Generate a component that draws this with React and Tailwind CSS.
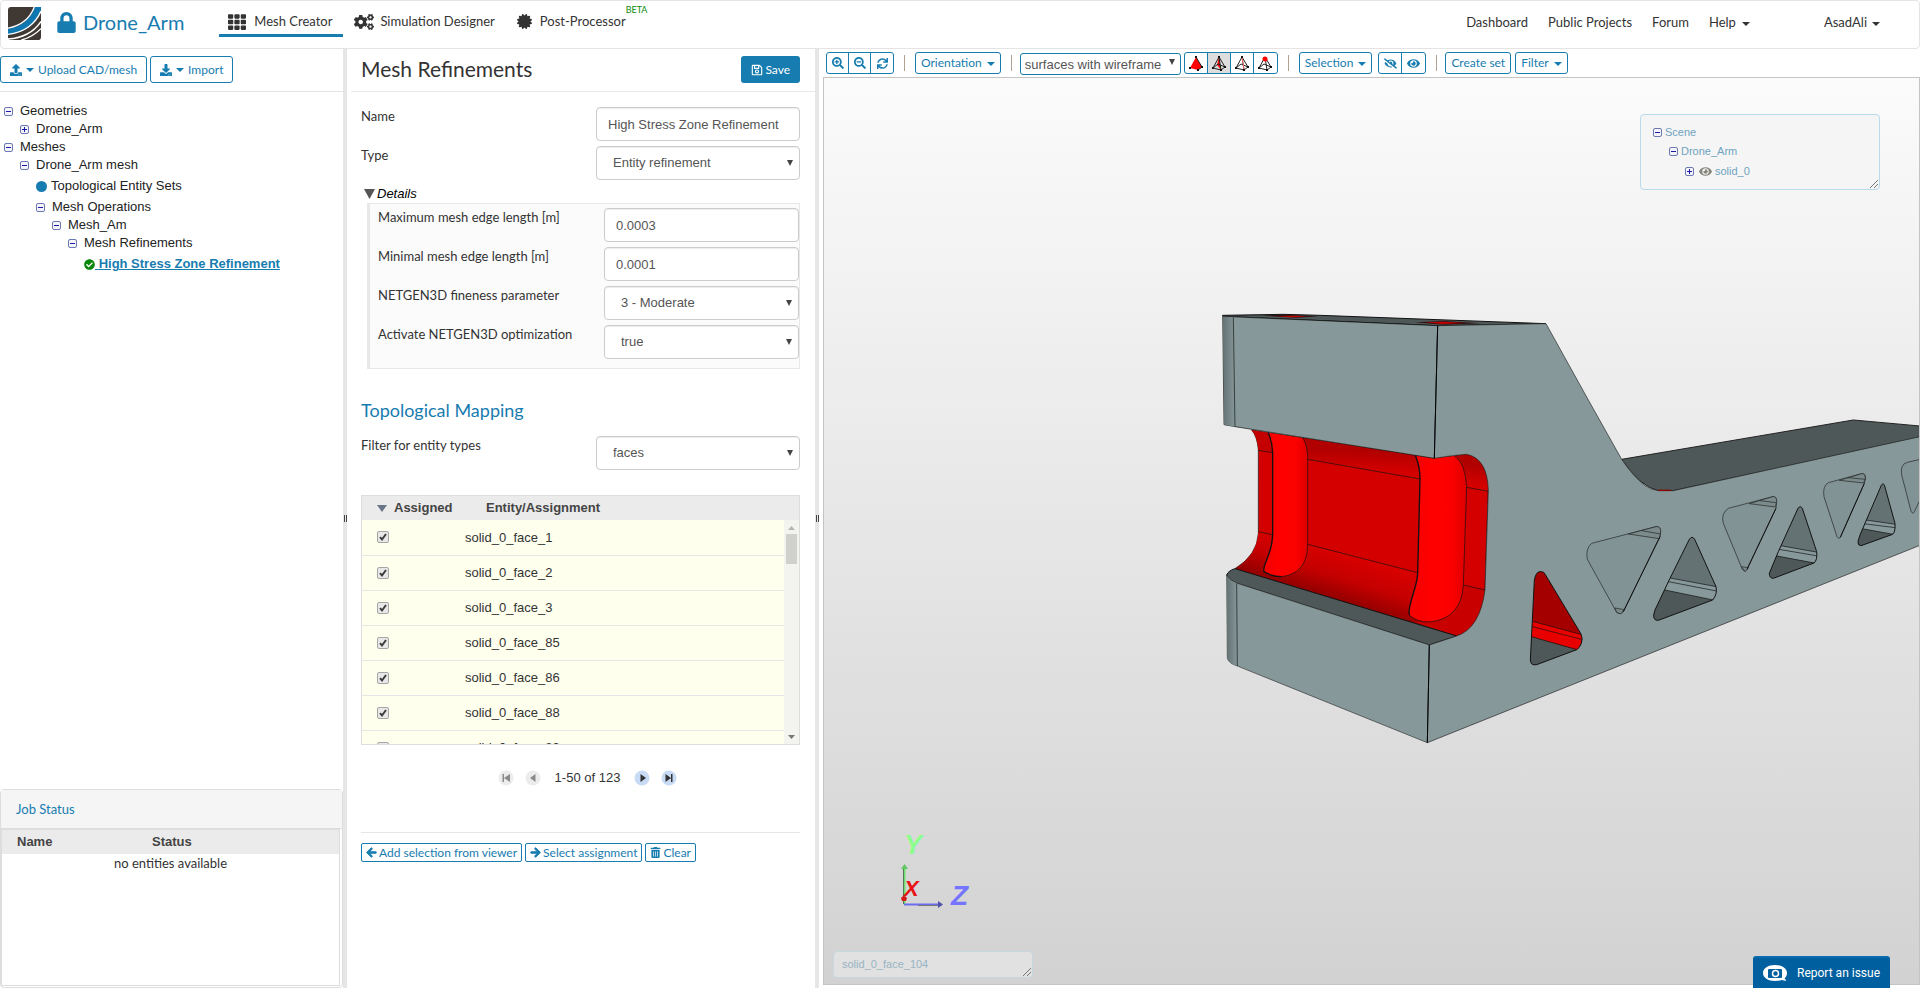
import { useState } from 'react'
import {
  FaArrowLeft, FaArrowRight, FaCertificate, FaCheckCircle, FaCogs, FaDownload, FaEye,
  FaEyeSlash, FaLock, FaRegSave, FaSearchMinus, FaSearchPlus, FaSync, FaTh, FaTrashAlt, FaUpload,
} from 'react-icons/fa'

const TREE = [
  { label: 'Geometries', pad: 'pl-1', open: true },
  { label: 'Drone_Arm', pad: 'pl-5', open: false },
  { label: 'Meshes', pad: 'pl-1', open: true },
  { label: 'Drone_Arm mesh', pad: 'pl-5', open: true },
  { label: 'Topological Entity Sets', pad: 'pl-9', leaf: 'set' },
  { label: 'Mesh Operations', pad: 'pl-9', open: true },
  { label: 'Mesh_Am', pad: 'pl-[52px]', open: true },
  { label: 'Mesh Refinements', pad: 'pl-[68px]', open: true },
  { label: 'High Stress Zone Refinement', pad: 'pl-[84px]', leaf: 'active' },
]

const FACES = [1, 2, 3, 85, 86, 88, 89]

function Caret() {
  return (
    <svg width="8" height="4" viewBox="0 0 8 4" className="mt-px shrink-0">
      <path d="M0 0h8L4 4z" fill="currentColor" />
    </svg>
  )
}

function Toggle({ open }) {
  return (
    <svg width="9" height="9" viewBox="0 0 9 9" className="shrink-0">
      <rect x=".5" y=".5" width="8" height="8" rx="1.5" fill="#f4f4fa" stroke="#6b78b4" />
      <path d={open ? 'M2 4.5h5' : 'M2 4.5h5M4.5 2v5'} stroke="#1a1aa8" />
    </svg>
  )
}

function Logo() {
  return (
    <svg width="33" height="33" viewBox="0 0 32 32">
      <rect width="32" height="32" rx="3" fill="#403833" />
      <path d="M0 21C13 19 22 12 26 0h6v3C28 16 17 25 0 27z" fill="#0f77b0" />
      <path d="M0 20.500C13 18 21 12 25.500 0M0 26.500C16 25 27 16 32 4M0 31C15 30 26 23 32 14M13 32c8-2 14-6 19-11" fill="none" stroke="#fff" strokeWidth="1.300" />
    </svg>
  )
}

function Header() {
  return (
    <header className="flex h-[49px] shrink-0 items-start justify-between rounded border border-[#e4e4e4] text-[13px] text-[#333]">
      <div className="flex">
        <a href="#home" aria-label="Home" className="ml-[7px] mt-[6px]"><Logo /></a>
        <a href="#project" className="ml-[15px] mt-[5px] flex h-8 items-center gap-[6px] text-[20px] text-[#177cb0]">
          <FaLock size={21} />
          Drone_Arm
        </a>
        <nav className="ml-[35px] flex">
          <a href="#mesh" className="flex h-9 items-center gap-2 border-b-3 border-[#177cb0] pl-[9px] pr-[11px] pt-2">
            <FaTh size={18} /> Mesh Creator
          </a>
          <a href="#simulation" className="ml-[11px] flex h-9 items-center gap-[6px] border-b-3 border-transparent pt-2">
            <FaCogs size={20} /> Simulation Designer
          </a>
          <a href="#post" className="ml-[22px] flex h-9 items-center gap-2 border-b-3 border-transparent pt-2">
            <FaCertificate size={15} /> Post-Processor
          </a>
          <sup className="top-0 mt-1 text-[9px] leading-[10px] text-[#0a8a0a]">BETA</sup>
        </nav>
      </div>
      <nav className="mr-[39px] flex h-11 items-center">
        <a href="#dashboard">Dashboard</a>
        <a href="#public" className="ml-5">Public Projects</a>
        <a href="#forum" className="ml-5">Forum</a>
        <a href="#help" className="ml-5 flex items-center gap-[6px]">Help <Caret /></a>
        <a href="#account" className="ml-[74px] flex items-center gap-[5px]">AsadAli <Caret /></a>
      </nav>
    </header>
  )
}

function TreeRow({ item }) {
  if (item.leaf === 'set') {
    return (
      <li className={`flex h-6 items-center gap-1 ${item.pad}`}>
        <span className="size-[11px] rounded-full bg-[#177cb0]" />
        {item.label}
      </li>
    )
  }
  if (item.leaf === 'active') {
    return (
      <li className={`flex h-6 items-center ${item.pad}`}>
        <FaCheckCircle size={11} className="text-[#0a860a]" />
        <a href="#refinement" className="whitespace-pre font-bold text-[#177cb0] underline"> {item.label}</a>
      </li>
    )
  }
  return (
    <li className={`flex h-[18px] items-center gap-[7px] ${item.pad}`}>
      <Toggle open={item.open} />
      {item.label}
    </li>
  )
}

function Sidebar() {
  const btn = 'flex h-[27px] items-center gap-1 rounded-[3px] border border-[#177cb0] px-[9px] text-[12px] text-[#177cb0]'
  return (
    <aside className="flex w-[343px] shrink-0 flex-col">
      <div className="flex gap-[3px] border-b border-[#e4e4e4] pb-2 pt-[7px]">
        <button className={btn}><FaUpload size={12} /><Caret />Upload CAD/mesh</button>
        <button className={btn}><FaDownload size={12} /><Caret />Import</button>
      </div>
      <ul className="mt-[10px] flex-1 font-['Liberation_Sans',sans-serif] text-[13px] text-[#222]">
        {TREE.map(item => <TreeRow key={item.label} item={item} />)}
      </ul>
      <section className="flex h-[199px] flex-col rounded border border-[#ddd]">
        <h2 className="flex h-[39px] shrink-0 items-center border-b border-[#ddd] bg-[#f5f5f5] px-[15px] pt-px text-[13px] text-[#177cb0]">Job Status</h2>
        <div className="mb-px mr-[2px] flex-1 border border-[#ddd]">
          <table className="w-full table-fixed text-[13px]">
            <thead>
              <tr className="h-6 bg-[#ebebeb] text-left font-['Liberation_Sans',sans-serif] text-[#444]">
                <th className="w-[135px] pl-[15px]">Name</th>
                <th className="pl-[15px]">Status</th>
              </tr>
            </thead>
            <tbody>
              <tr><td colSpan={2} className="text-center leading-[18px]">no entities available</td></tr>
            </tbody>
          </table>
        </div>
      </section>
    </aside>
  )
}

function Splitter() {
  return (
    <div className="flex w-1 shrink-0 items-center justify-center gap-px bg-[#e6e6e6]">
      <span className="h-[7px] w-px bg-[#444]" />
      <span className="h-[7px] w-px bg-[#444]" />
    </div>
  )
}

function Field({ id, label, width, children }) {
  return (
    <div className="mb-[5px] flex items-start justify-between">
      <label htmlFor={id} className="text-[13px] leading-[18px] text-[#333]">{label}</label>
      <div className={`relative shrink-0 ${width}`}>{children}</div>
    </div>
  )
}

const CONTROL = "h-[34px] w-full appearance-none rounded border border-[#ccc] bg-white font-['Liberation_Sans',sans-serif] text-[13px] text-[#555] shadow-[inset_0_1px_1px_rgba(0,0,0,0.075)]"

function TextField({ id, label, value, width }) {
  return (
    <Field id={id} label={label} width={width}>
      <input id={id} defaultValue={value} className={`${CONTROL} px-[11px]`} />
    </Field>
  )
}

function SelectField({ id, label, value, width }) {
  return (
    <Field id={id} label={label} width={width}>
      <select id={id} defaultValue={value} className={`${CONTROL} px-4`}>
        <option>{value}</option>
      </select>
      <svg width="6" height="6" viewBox="0 0 6 6" className="pointer-events-none absolute right-[7px] top-[14px]">
        <path d="M0 0h6L3 6z" fill="#444" />
      </svg>
    </Field>
  )
}

function FaceRow({ n }) {
  const [checked, setChecked] = useState(true)
  const id = `face-${n}`
  return (
    <tr className="h-[35px] border-b border-[#e6e6e6] bg-[#ffffee]">
      <td className="pl-[15px]">
        <span className="relative block size-3">
          <input
            id={id}
            type="checkbox"
            checked={checked}
            onChange={() => setChecked(!checked)}
            className="block size-3 appearance-none rounded-[2px] border border-[#a6a6a6] bg-[#e8e8e8]"
          />
          {checked && (
            <svg viewBox="0 0 12 12" className="pointer-events-none absolute inset-0">
              <path d="M3 6.200l2 2.300 4-5.500" fill="none" stroke="#3c3c3c" strokeWidth="2" />
            </svg>
          )}
        </span>
      </td>
      <td><label htmlFor={id}>solid_0_face_{n}</label></td>
    </tr>
  )
}

function FaceTable() {
  return (
    <div className="relative h-[250px] overflow-hidden border border-[#ddd] font-['Liberation_Sans',sans-serif] text-[13px] text-[#333]">
      <table className="w-full table-fixed border-collapse">
        <thead>
          <tr className="h-6 bg-[#ebebeb] text-left text-[#444]">
            <th className="w-[103px]">
              <span className="flex items-center gap-[7px] pl-[15px]">
                <svg width="10" height="7" viewBox="0 0 10 7"><path d="M0 0h10L5 7z" fill="#6a7688" /></svg>
                Assigned
              </span>
            </th>
            <th className="pl-[21px]">Entity/Assignment</th>
          </tr>
        </thead>
        <tbody className="align-middle">
          {FACES.map(n => <FaceRow key={n} n={n} />)}
        </tbody>
      </table>
      {/* scrollbar */}
      <div className="absolute bottom-0 right-0 top-6 flex w-[15px] flex-col items-center bg-[#f3f4ef]">
        <svg width="7" height="4" viewBox="0 0 7 4" className="mt-[6px]"><path d="M0 4h7L3.500 0z" fill="#b4b4b0" /></svg>
        <span className="mt-1 h-[30px] w-[11px] bg-[#d0d1cc]" />
        <svg width="7" height="4" viewBox="0 0 7 4" className="mb-[5px] mt-auto"><path d="M0 0h7L3.500 4z" fill="#777" /></svg>
      </div>
    </div>
  )
}

function PagerButton({ label, d, active }) {
  return (
    <button aria-label={label} className="block size-4">
      <svg width="16" height="16" viewBox="0 0 16 16">
        <circle cx="8" cy="8" r="7.500" fill={active ? '#c8dbf5' : '#ececec'} />
        <path d={d} fill={active ? '#333' : '#8a8a8a'} />
      </svg>
    </button>
  )
}

function Panel() {
  const action = 'flex h-[19px] items-center gap-[2px] rounded-[2px] border border-[#177cb0] px-[4px] text-[12px] leading-none text-[#177cb0]'
  return (
    <main className="flex w-[468px] shrink-0 flex-col pl-1">
      <div className="flex items-center justify-between border-b border-[#e8e8e8] pb-2 pl-[10px] pr-[15px] pt-[7px]">
        <h1 className="pb-[2px] text-[21px] leading-[25px] text-[#333]">Mesh Refinements</h1>
        <button className="flex h-[27px] items-center gap-[2px] rounded-[3px] bg-[#177cb0] px-[10px] text-[12px] text-white">
          <FaRegSave size={12} /> Save
        </button>
      </div>
      <div className="pl-[10px] pr-[15px] pt-[15px]">
        <TextField id="name" label="Name" value="High Stress Zone Refinement" width="w-[204px]" />
        <SelectField id="type" label="Type" value="Entity refinement" width="w-[204px]" />
        <button className="ml-[3px] mt-[1px] flex h-[17px] items-center gap-[2px] font-['Liberation_Sans',sans-serif] text-[13px] italic text-black">
          <svg width="11" height="10" viewBox="0 0 11 10"><path d="M0 0h11L5.500 10z" fill="#555" /></svg>
          Details
        </button>
        <div className="ml-[6px] mt-px h-[166px] border border-l-3 border-[#e8e8e8] bg-[#fbfbfb] pl-2 pt-1">
          <TextField id="max" label="Maximum mesh edge length [m]" value="0.0003" width="w-[195px]" />
          <TextField id="min" label="Minimal mesh edge length [m]" value="0.0001" width="w-[195px]" />
          <SelectField id="fineness" label="NETGEN3D fineness parameter" value="3 - Moderate" width="w-[195px]" />
          <SelectField id="optimize" label="Activate NETGEN3D optimization" value="true" width="w-[195px]" />
        </div>
        <h2 className="mb-[14px] mt-[29px] text-[18px] leading-6 text-[#177cb0]">Topological Mapping</h2>
        <SelectField id="filter" label="Filter for entity types" value="faces" width="w-[204px]" />
        <div className="mt-[25px]"><FaceTable /></div>
        <div className="mt-[25px] flex h-4 items-center justify-center gap-[11px] pl-[14px] font-['Liberation_Sans',sans-serif] text-[13px] text-[#333]">
          <PagerButton label="First page" d="M4.500 4H6v8H4.500zM12 4v8L6 8z" />
          <PagerButton label="Previous page" d="M10.500 4v8L5 8z" />
          <span className="px-[3px]">1-50 of 123</span>
          <PagerButton label="Next page" d="M6.500 4v8L12 8z" active />
          <PagerButton label="Last page" d="M4.500 4v8L10 8zM10 4h1.500v8H10z" active />
        </div>
        <div className="mt-[46px] flex gap-[3px] border-t border-[#e6e6e6] pt-[10px]">
          <button className={action}><FaArrowLeft size={11} className="stroke-current stroke-[40]" />Add selection from viewer</button>
          <button className={action}><FaArrowRight size={11} className="stroke-current stroke-[40]" />Select assignment</button>
          <button className={action}><FaTrashAlt size={11} />Clear</button>
        </div>
      </div>
    </main>
  )
}

function TetraIcon({ kind }) {
  return (
    <svg width="14" height="15" viewBox="0 0 14 15">
      {kind === 'volume' && <path d="M7 1L1 12l8 2 4-3z" fill="#f00" />}
      {kind === 'face' && <path d="M7 1L5 9l4 5z" fill="#f00" />}
      <path
        d={kind === 'volume' ? 'M7 1l6 10-4 3' : 'M7 1L1 12l8 2 4-3zM7 1l2 13M1 12l5-4 7 3'}
        fill="none"
        stroke="#222"
      />
      {kind === 'edge' && <path d="M7 1l2 12" stroke="#f66" />}
      <path d="M0 11h2v2H0zM8 13h2v2H8zM12 10h2v2h-2z" fill="#111" />
      {kind === 'node' ? <circle cx="7" cy="3" r="2.500" fill="#f00" /> : <path d="M6 0h2v2H6z" fill="#111" />}
    </svg>
  )
}

function Divider() {
  return <div className="mx-[10px] h-4 w-px bg-[#b0a090]" />
}

function Toolbar() {
  const group = 'flex h-[22px] divide-x divide-[#177cb0] overflow-hidden rounded-[3px] border border-[#177cb0] text-[#177cb0]'
  const single = 'flex h-[22px] items-center gap-[5px] rounded-[3px] border border-[#177cb0] px-[5px] text-[12px] text-[#177cb0]'
  const cell = 'flex w-[22px] items-center justify-center'
  const wideCell = 'flex w-[23px] items-center justify-center'
  return (
    <div className="ml-[7px] flex h-7 items-center">
      <div className={group}>
        <button aria-label="Zoom in" className={cell}><FaSearchPlus size={12} /></button>
        <button aria-label="Zoom out" className={cell}><FaSearchMinus size={12} /></button>
        <button aria-label="Reset view" className={cell}><FaSync size={11} /></button>
      </div>
      <Divider />
      <button className={single}>Orientation <Caret /></button>
      <Divider />
      <div className="relative -ml-[2px] w-[161px]">
        <select
          aria-label="Render mode"
          defaultValue="surfaces with wireframe"
          className="h-[22px] w-full appearance-none rounded-[3px] border border-[#177cb0] bg-white pl-1 font-['Liberation_Sans',sans-serif] text-[13px] text-[#555]"
        >
          <option>surfaces with wireframe</option>
        </select>
        <svg width="6" height="6" viewBox="0 0 6 6" className="pointer-events-none absolute right-[6px] top-2">
          <path d="M0 0h6L3 6z" fill="#444" />
        </svg>
      </div>
      <div className={`ml-[3px] ${group}`}>
        <button aria-label="Volumes" className={wideCell}><TetraIcon kind="volume" /></button>
        <button aria-label="Faces" className={`${wideCell} bg-[#ddd]`}><TetraIcon kind="face" /></button>
        <button aria-label="Edges" className={wideCell}><TetraIcon kind="edge" /></button>
        <button aria-label="Nodes" className={wideCell}><TetraIcon kind="node" /></button>
      </div>
      <Divider />
      <button className={single}>Selection <Caret /></button>
      <div className={`ml-[6px] ${group}`}>
        <button aria-label="Hide" className={wideCell}><FaEyeSlash size={13} /></button>
        <button aria-label="Show" className={wideCell}><FaEye size={13} /></button>
      </div>
      <Divider />
      <button className={`-ml-[2px] ${single}`}>Create set</button>
      <button className={`ml-1 ${single}`}>Filter <Caret /></button>
    </div>
  )
}

// Triangular pocket seen from below: back wall, lit fillet band, shaded floor
function Pocket({ id, outline, band, floor, lines, wall, light }) {
  return (
    <g>
      <clipPath id={id}><path d={outline} /></clipPath>
      <g clipPath={`url(#${id})`}>
        <path d={outline} fill={wall} />
        <path d={band} fill={light} />
        <path d={floor} fill="#4f5858" />
        <path d={lines} fill="none" stroke="#111" strokeWidth="2" />
      </g>
      <path d={outline} fill="none" stroke="#111" strokeWidth="3" />
    </g>
  )
}

function Model() {
  return (
    <svg viewBox="824 78 1095 906" preserveAspectRatio="xMaxYMin meet" className="absolute inset-0 h-full w-full">
      <defs>
        <linearGradient id="cyl" x1="0" x2="1" y1="0" y2="0">
          <stop offset="0" stopColor="#f40000" />
          <stop offset=".4" stopColor="#ff0000" />
          <stop offset=".75" stopColor="#fa0000" />
          <stop offset="1" stopColor="#dc0000" />
        </linearGradient>
        <linearGradient id="topFillet" x1=".55" x2=".45" y1="0" y2="1">
          <stop offset=".3" stopColor="#b00000" />
          <stop offset=".8" stopColor="#d40000" />
        </linearGradient>
        <linearGradient id="lowFillet" gradientUnits="userSpaceOnUse" x1="460" y1="770" x2="415" y2="910">
          <stop offset="0" stopColor="#d80000" />
          <stop offset=".5" stopColor="#c40000" />
          <stop offset="1" stopColor="#8c0000" />
        </linearGradient>
        <linearGradient id="edge" x1="0" x2="1" y1="0" y2="0">
          <stop offset="0" stopColor="#647274" />
          <stop offset="1" stopColor="#869899" />
        </linearGradient>
      </defs>

      <g transform="translate(1200 300) scale(.333333)" strokeLinejoin="round">
        {/* slot */}
        <path d="M155 390L703 475L800 463Q862 470 865 570L855 870Q845 985 770 1008L105 806Q172 765 175 700V450Q172 410 155 390z" fill="#d40000" stroke="#111" strokeWidth="2" />
        <path d="M308 413L648 466Q660 500 660 537L323 478Q322 440 308 413z" fill="url(#topFillet)" />
        <path d="M763 468L800 463Q862 470 865 574L800 562Q797 490 763 468z" fill="url(#topFillet)" />
        <path d="M155 390L205 398Q218 430 218 458L175 451Q172 410 155 390z" fill="#c40000" />
        <path d="M175 695L218 704L323 733L653 818L855 870Q845 985 770 1008L105 806Q172 765 175 695z" fill="url(#lowFillet)" />
        <path d="M790 855L855 870Q845 985 770 1008L640 965L700 966Q785 950 790 855z" fill="#c80000" />
        <path d="M175 451l43 7M175 695l43 9M323 478l337 59M323 733l330 85M800 562l65 12M790 855l65 15" fill="none" stroke="#111" strokeWidth="2" />
        <path d="M205 398Q218 430 218 460V700C218 765 185 795 192 815Q215 830 245 830Q322 820 323 735V470Q322 435 308 413z" fill="url(#cyl)" />
        <path d="M205 398Q218 430 218 460V700C218 765 185 795 192 815Q215 830 245 830" fill="none" stroke="#111" strokeWidth="4" />
        <path d="M245 830Q322 820 323 735V470Q322 435 308 413" fill="none" stroke="#111" strokeWidth="2" />
        <path d="M646 466Q660 500 660 537L653 820C653 860 620 920 628 945Q650 967 690 966Q785 955 790 855L800 560Q795 485 763 468L703 475z" fill="url(#cyl)" />
        <path d="M646 466Q660 500 660 537L653 820C653 860 620 920 628 945" fill="none" stroke="#111" strokeWidth="4" />
        <path d="M628 945Q650 967 690 966Q785 955 790 855L800 560Q795 485 763 468" fill="none" stroke="#111" strokeWidth="2" />

        {/* upper block */}
        <path d="M68 46L250 43L360 46L1038 71L713 77L68 49z" fill="#4f5858" stroke="#111" strokeWidth="3" />
        <path d="M185 47L250 44L355 49L290 53z" fill="#301010" />
        <path d="M230 48l60-1 30 3-50 2z" fill="#c00000" />
        <path d="M645 67L730 63L840 70L730 74z" fill="#301010" />
        <path d="M675 67l60-2 60 4-70 3z" fill="#c00000" />
        <path d="M68 49L713 77L703 475L105 380L72 374z" fill="#869899" stroke="#111" strokeWidth="2" />
        <path d="M69 50L100 52L105 380L73 374z" fill="url(#edge)" />
        <path d="M100 52l5 328" stroke="#111" strokeWidth="2" />

        {/* lower block */}
        <path d="M80 825Q85 812 105 806L770 1008L688 1035L112 850Q86 840 80 825z" fill="#4f5858" stroke="#111" strokeWidth="3" />
        <path d="M80 825Q86 840 112 850L688 1035L682 1328L112 1098Q86 1090 82 1075z" fill="#869899" stroke="#333" strokeWidth="2" />
        <path d="M81 828Q86 840 110 850L112 1097Q86 1090 83 1075z" fill="url(#edge)" />
        <path d="M110 850l2 248" stroke="#111" strokeWidth="2" />

        {/* side of the arm */}
        <path d="M1265 478L1960 360L2160 378V412L1420 572L1375 572Q1320 560 1265 478z" fill="#4f5858" stroke="#222" strokeWidth="3" />
        <path d="M713 77L1038 71L1165 300L1265 478Q1300 530 1335 557Q1352 570 1375 572H1420L2160 410V736L682 1328L688 1035L770 1008Q840 985 855 870L865 570Q862 475 800 463Q770 464 703 475z" fill="#869899" stroke="#222" strokeWidth="2" />
        <path d="M713 77L703 475M688 1035L682 1328" stroke="#000" strokeWidth="3" />
        <path d="M1375 571h38" stroke="#8c0000" strokeWidth="4" />
      </g>

      <g transform="translate(1500 400) scale(.333333)" strokeLinejoin="round">
        <Pocket
          id="p0"
          outline="M103 540Q108 512 124 515Q132 515 135 522L242 700Q250 715 244 730Q238 745 230 749L110 794Q92 798 91 780z"
          band="M90 662L260 708V757L90 709z"
          floor="M90 709L240 752V810H80z"
          lines="M90 662L260 708M90 678L260 722M90 709L235 750"
          wall="#a40000"
          light="#e80000"
        />
        <Pocket
          id="p1"
          outline="M568 418Q577 406 584 418L648 560Q653 582 638 600L475 661Q460 662 461 645L465 630L510 535z"
          band="M500 532L660 562V604L480 567z"
          floor="M480 567L650 603V680H440z"
          lines="M500 532L660 562M495 543L660 575M480 567L640 600"
          wall="#657273"
          light="#87999b"
        />
        <Pocket
          id="p2"
          outline="M894 325Q901 315 907 325L950 455Q953 480 942 489L820 535Q808 535 808 520L835 455z"
          band="M830 435L960 458V492L820 466z"
          floor="M820 466L950 490V550H790z"
          lines="M830 435L960 458M825 446L960 469M820 466L942 489"
          wall="#657273"
          light="#87999b"
        />
        <Pocket
          id="p3"
          outline="M1144 256Q1150 246 1154 258L1185 370Q1187 395 1178 403L1083 437Q1073 437 1074 425L1080 405z"
          band="M1090 359L1195 374V406L1080 385z"
          floor="M1080 385L1185 404V450H1060z"
          lines="M1090 359L1195 374M1090 371L1195 384M1080 385L1180 403"
          wall="#657273"
          light="#87999b"
        />
        {/* through cut-outs */}
        <g fill="#819394" stroke="#222" strokeWidth="2">
          <path d="M275 430L468 380Q482 378 482 395L480 410L370 635Q360 645 350 637L262 478Q256 445 275 430z" />
          <path d="M685 325L818 290Q830 288 830 305L828 325L741 508Q734 518 727 508L670 370Q662 340 685 325z" />
          <path d="M985 248L1085 221Q1096 219 1097 235L1093 250L1021 412Q1016 420 1011 410L972 290Q967 258 985 248z" />
          <path d="M1260 178L1222 187Q1200 192 1205 225L1233 333Q1238 345 1243 335L1260 300" />
        </g>
        <path d="M385 402L468 380Q482 378 482 395L478 416zM748 311L818 290Q830 288 830 305L826 321zM1018 241L1085 221Q1096 219 1096 235L1091 249zM345 624l28 5-11 13-12-5zM724 500l21 3-9 12z" fill="#7b8b8c" stroke="#222" strokeWidth="2" />
        <path d="M425 392l56 10M780 302l48 6M1045 233l50 5" stroke="#222" strokeWidth="2" />
        <path d="M480 410L370 635M828 325L741 508M1093 250L1021 412" stroke="#111" strokeWidth="3" />
      </g>

      {/* axis triad */}
      <path d="M904.500 904V868" stroke="#6fe070" strokeWidth="2" />
      <path d="M903.500 904V868" stroke="#557755" strokeWidth="1" />
      <path d="M901 869l3.500-5 3.500 5z" fill="#5fc860" />
      <path d="M904 904.500h35" stroke="#6c6cf0" strokeWidth="2" />
      <path d="M918 905.500h20" stroke="#777" strokeWidth="1" />
      <path d="M938 901l5 3.500-5 3.500z" fill="#5050a8" />
      <path d="M901 898q3-4 6 0l-1 3h-4z" fill="#d81818" />
      <g fontFamily="Liberation Sans, sans-serif" fontStyle="italic" fontWeight="bold">
        <text x="904" y="854" fontSize="27" fill="#8cff8c">Y</text>
        <text x="904" y="896" fontSize="22" fill="#e81414">X</text>
        <text x="951" y="905" fontSize="28" fill="#7474ff">Z</text>
      </g>
    </svg>
  )
}

function Grip() {
  return (
    <svg width="8" height="8" viewBox="0 0 8 8" className="absolute bottom-px right-px">
      <path d="M0 8l8-8M4 8l4-4" stroke="#777" strokeWidth="1" />
    </svg>
  )
}

function Viewer() {
  return (
    <section className="flex min-w-0 flex-1 flex-col">
      <Toolbar />
      <div className="relative mb-[3px] ml-1 flex-1 overflow-hidden border border-[#c4c4c4] bg-linear-to-b from-[#fbfbfb] to-[#d2d2d2]">
        <Model />
        <div className="absolute right-[39px] top-9 h-[76px] w-[240px] rounded border border-[#b5dce8] bg-[#f5f5f5] py-2 pl-3 font-['Liberation_Sans',sans-serif] text-[11px] text-[#6fa3bf]">
          <div className="flex h-[19px] items-center gap-[3px]"><Toggle open />Scene</div>
          <div className="flex h-[19px] items-center gap-[3px] pl-4"><Toggle open />Drone_Arm</div>
          <div className="flex h-5 items-center gap-[3px] pl-8">
            <Toggle />
            <FaEye size={13} className="ml-[2px] text-[#85857a]" />
            solid_0
          </div>
          <Grip />
        </div>
        <div className="absolute bottom-[6px] left-[9px] flex h-[27px] w-[200px] items-center rounded border border-[#c5d8de] bg-[#e1e1e1] pl-2 font-['Liberation_Sans',sans-serif] text-[11px] text-[#98b4c3]">
          solid_0_face_104
          <Grip />
        </div>
      </div>
    </section>
  )
}

export default function App() {
  return (
    <div className="flex h-screen flex-col overflow-hidden bg-white font-['Lato',sans-serif] text-[#333]">
      <Header />
      <div className="flex min-h-0 flex-1">
        <Sidebar />
        <Splitter />
        <Panel />
        <Splitter />
        <Viewer />
      </div>
      <button className="fixed bottom-0 right-[30px] flex h-8 w-[137px] items-center gap-[10px] rounded-t-[3px] border-t-2 border-[#0a6cb0] bg-[#005f9e] pl-[10px] font-['Roboto',sans-serif] text-[12px] text-white">
        <svg width="24" height="17" viewBox="0 0 24 17">
          <path d="M12 0c7 0 12 3.500 12 8 0 2.300-.9 4-2.400 5.400L23.500 16l-5-.9C16.600 15.900 14.500 16 12 16 5 16 0 12.500 0 8s5-8 12-8z" fill="#fff" />
          <rect x="5" y="4" width="14" height="9" rx="1" fill="#005f9e" />
          <circle cx="12.500" cy="8.500" r="3" fill="none" stroke="#fff" strokeWidth="1.500" />
        </svg>
        Report an issue
      </button>
    </div>
  )
}
